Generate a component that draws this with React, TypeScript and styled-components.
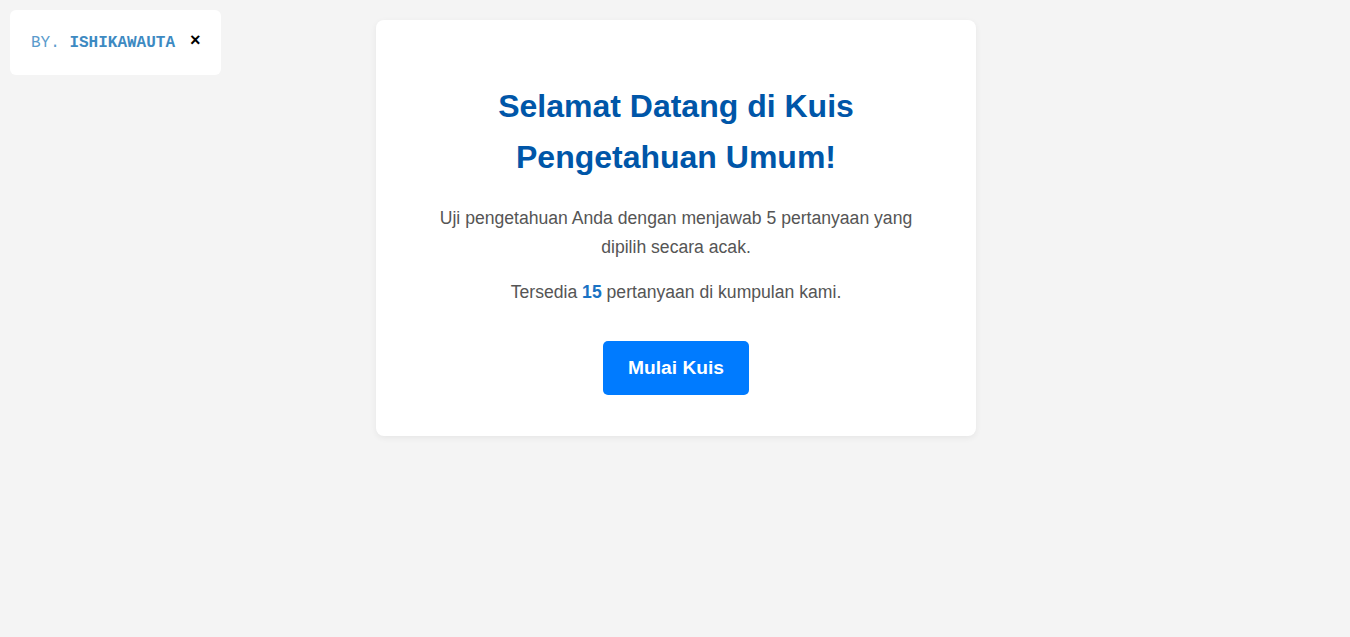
import React, { useState } from 'react';
import styled, { createGlobalStyle } from 'styled-components';

const GlobalStyle = createGlobalStyle`
  html, body {
    margin: 0;
    padding: 0;
    background-color: #f4f4f4;
  }
  body {
    font-family: "Liberation Sans", Arial, sans-serif;
    color: #333;
  }
`;

const Page = styled.div`
  min-height: 100vh;
  display: flex;
  justify-content: center;
  align-items: flex-start;
  padding: 20px 0 0 2px;
  box-sizing: border-box;
`;

const Credit = styled.div`
  position: fixed;
  top: 10px;
  left: 10px;
  height: 65px;
  box-sizing: border-box;
  padding: 0 20px 0 21px;
  display: flex;
  align-items: center;
  gap: 15px;
  background: #fff;
  border-radius: 6px;
  font-family: "Liberation Mono", "Courier New", monospace;
  font-size: 16px;
  white-space: nowrap;
  color: #5a9bcc;
`;

const CreditName = styled.strong`
  color: #3d8ac2;
  font-weight: bold;
`;

const CloseButton = styled.button`
  border: none;
  background: none;
  padding: 0;
  margin-top: -6px;
  font-family: "Liberation Sans", Arial, sans-serif;
  font-size: 18px;
  font-weight: bold;
  line-height: 1;
  color: #000;
  cursor: pointer;
`;

const Card = styled.div`
  width: 600px;
  box-sizing: border-box;
  padding: 40px 40px 41px;
  background: #fff;
  border-radius: 8px;
  box-shadow: 0 2px 6px rgba(0, 0, 0, 0.06);
  text-align: center;
`;

const Title = styled.h1`
  margin: 21px 0 21px;
  font-size: 32px;
  line-height: 1.6;
  font-weight: bold;
  color: #0056a8;
`;

const Text = styled.p`
  margin: 0 0 17.6px;
  font-size: 17.6px;
  line-height: 1.6;
  color: #555;
`;

const Count = styled.strong`
  color: #1a73c4;
`;

const StartButton = styled.button`
  margin-top: 16.6px;
  padding: 16px 25px;
  border: none;
  border-radius: 5px;
  background: #007bff;
  color: #fff;
  font-family: "Liberation Sans", Arial, sans-serif;
  font-size: 19.2px;
  font-weight: bold;
  line-height: 22px;
  cursor: pointer;

  &:hover {
    background: #0069d9;
  }
`;

export default function App() {
  const [showCredit, setShowCredit] = useState(true);
  const totalQuestions = 15;

  return (
    <>
      <GlobalStyle />
      {showCredit && (
        <Credit>
          <span>
            BY. <CreditName>ISHIKAWAUTA</CreditName>
          </span>
          <CloseButton onClick={() => setShowCredit(false)}>×</CloseButton>
        </Credit>
      )}
      <Page>
        <Card>
          <Title>
            Selamat Datang di Kuis
            <br />
            Pengetahuan Umum!
          </Title>
          <Text>
            Uji pengetahuan Anda dengan menjawab 5 pertanyaan yang dipilih secara acak.
          </Text>
          <Text>
            Tersedia <Count>{totalQuestions}</Count> pertanyaan di kumpulan kami.
          </Text>
          <StartButton>Mulai Kuis</StartButton>
        </Card>
      </Page>
    </>
  );
}
